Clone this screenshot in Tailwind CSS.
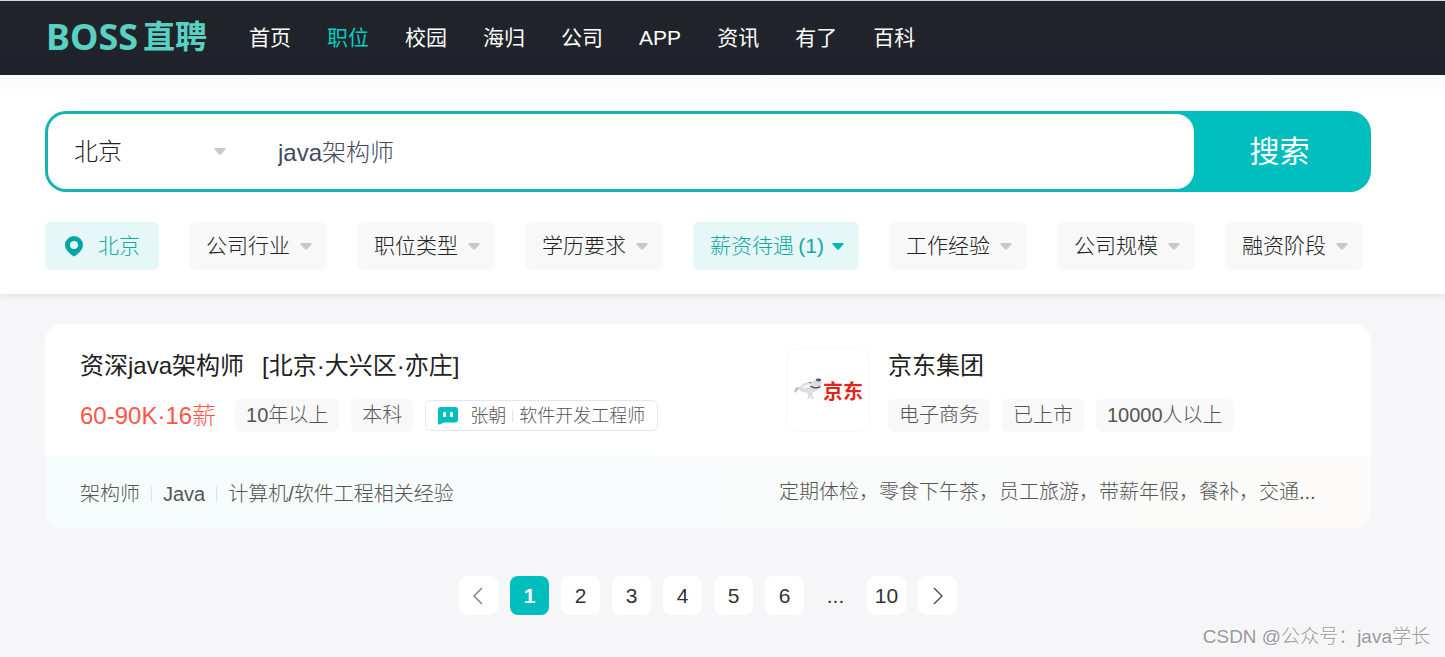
<!DOCTYPE html>
<html lang="zh-CN">
<head>
<meta charset="utf-8">
<meta name="viewport" content="width=device-width, initial-scale=1">
<title>BOSS直聘 - java架构师</title>
<script src="https://cdn.jsdelivr.net/npm/@tailwindcss/browser@4"></script>
</head>
<body class="relative flex min-h-screen flex-col bg-[#f6f6f8] font-['Liberation_Sans','Noto_Sans_CJK_SC',sans-serif] font-light text-[#222]">

<header class="flex h-[75px] items-center gap-[42px] border-t border-[#d3dcdc] bg-linear-to-b from-[#20252a] to-[#20222b] pl-[46px]">
  <a href="#" class="flex items-center gap-[5px] pb-[3px] font-bold text-[#5ad0c2]">
    <span class="font-['Noto_Sans',sans-serif] text-[36px] leading-[48px]">BOSS</span>
    <span class="text-[32px] leading-[48px]">直聘</span>
  </a>
  <nav class="flex gap-9 text-[21px] leading-8 font-normal whitespace-nowrap text-white">
    <a href="#">首页</a>
    <a href="#" class="text-[#00d0c2]">职位</a>
    <a href="#">校园</a>
    <a href="#">海归</a>
    <a href="#">公司</a>
    <a href="#">APP</a>
    <a href="#">资讯</a>
    <a href="#">有了</a>
    <a href="#">百科</a>
  </nav>
</header>

<section class="bg-linear-to-b from-[#fafafa] to-white to-10% pt-9 pr-[74px] pb-6 pl-[45px] shadow-[0_2px_6px_rgba(0,0,0,0.08)]">
  <form class="flex h-[81px] rounded-[21px] bg-[linear-gradient(to_right,#13b5b1_85%,#00bebd_85%)] p-[3px]">
    <div class="flex min-w-0 flex-1 rounded-[18px] bg-white text-2xl">
      <label class="relative flex w-[200px] items-center">
        <select aria-label="城市" class="h-full w-full appearance-none rounded-l-[18px] bg-transparent pl-[26px] outline-none"><option>北京</option></select>
        <svg class="pointer-events-none absolute right-[22px] h-[7px] w-3" viewBox="0 0 12 7" fill="#c9c9c9"><path d="M1.200 0h9.600q1.400 .3 .5 1.400L7 6.300q-1 1-2 0L.7 1.400Q-.2 .3 1.200 0z"/></svg>
      </label>
      <input type="text" aria-label="搜索职位" value="java架构师" class="min-w-0 flex-1 bg-transparent pt-0.5 pl-[30px] text-[#414a60] outline-none">
    </div>
    <button type="button" class="w-[174px] pr-[3px] text-3xl font-normal text-white">搜索</button>
  </form>

  <div class="mt-[30px] flex gap-[30px] text-[21px] whitespace-nowrap">
    <button class="flex h-12 items-center gap-[14px] rounded-md bg-[#e5f7f6] px-[19px] text-[#12a6a5]">
      <svg class="h-[22px] w-5" viewBox="0 0 20 22" fill="#00a6a7"><path fill-rule="evenodd" d="M10 1a9 9 0 0 1 9 9c0 5-5.500 9-8 11q-1 .8-2 0C6.500 19 1 15 1 10a9 9 0 0 1 9-9zm0 5a4 4 0 1 0 0 8 4 4 0 0 0 0-8z"/></svg>
      北京
    </button>
    <label class="relative flex items-center"><select aria-label="公司行业" class="h-12 w-[138px] appearance-none rounded-md bg-[#f8f8f8] pl-[17px]"><option>公司行业</option></select><svg class="pointer-events-none absolute right-[15px] h-[7px] w-3" viewBox="0 0 12 7" fill="#c9c9c9"><path d="M1.200 0h9.600q1.400 .3 .5 1.400L7 6.300q-1 1-2 0L.7 1.400Q-.2 .3 1.200 0z"/></svg></label>
    <label class="relative flex items-center"><select aria-label="职位类型" class="h-12 w-[138px] appearance-none rounded-md bg-[#f8f8f8] pl-[17px]"><option>职位类型</option></select><svg class="pointer-events-none absolute right-[15px] h-[7px] w-3" viewBox="0 0 12 7" fill="#c9c9c9"><path d="M1.200 0h9.600q1.400 .3 .5 1.400L7 6.300q-1 1-2 0L.7 1.400Q-.2 .3 1.200 0z"/></svg></label>
    <label class="relative flex items-center"><select aria-label="学历要求" class="h-12 w-[138px] appearance-none rounded-md bg-[#f8f8f8] pl-[17px]"><option>学历要求</option></select><svg class="pointer-events-none absolute right-[15px] h-[7px] w-3" viewBox="0 0 12 7" fill="#c9c9c9"><path d="M1.200 0h9.600q1.400 .3 .5 1.400L7 6.300q-1 1-2 0L.7 1.400Q-.2 .3 1.200 0z"/></svg></label>
    <label class="relative flex items-center"><select aria-label="薪资待遇" class="h-12 w-[166px] appearance-none rounded-md bg-[#e5f7f6] pl-[17px] text-[#12a6a5]"><option>薪资待遇&thinsp;(1)</option></select><svg class="pointer-events-none absolute right-[15px] h-[7px] w-3" viewBox="0 0 12 7" fill="#00b8b0"><path d="M1.200 0h9.600q1.400 .3 .5 1.400L7 6.300q-1 1-2 0L.7 1.400Q-.2 .3 1.200 0z"/></svg></label>
    <label class="relative flex items-center"><select aria-label="工作经验" class="h-12 w-[138px] appearance-none rounded-md bg-[#f8f8f8] pl-[17px]"><option>工作经验</option></select><svg class="pointer-events-none absolute right-[15px] h-[7px] w-3" viewBox="0 0 12 7" fill="#c9c9c9"><path d="M1.200 0h9.600q1.400 .3 .5 1.400L7 6.300q-1 1-2 0L.7 1.400Q-.2 .3 1.200 0z"/></svg></label>
    <label class="relative flex items-center"><select aria-label="公司规模" class="h-12 w-[138px] appearance-none rounded-md bg-[#f8f8f8] pl-[17px]"><option>公司规模</option></select><svg class="pointer-events-none absolute right-[15px] h-[7px] w-3" viewBox="0 0 12 7" fill="#c9c9c9"><path d="M1.200 0h9.600q1.400 .3 .5 1.400L7 6.300q-1 1-2 0L.7 1.400Q-.2 .3 1.200 0z"/></svg></label>
    <label class="relative flex items-center"><select aria-label="融资阶段" class="h-12 w-[138px] appearance-none rounded-md bg-[#f8f8f8] pl-[17px]"><option>融资阶段</option></select><svg class="pointer-events-none absolute right-[15px] h-[7px] w-3" viewBox="0 0 12 7" fill="#c9c9c9"><path d="M1.200 0h9.600q1.400 .3 .5 1.400L7 6.300q-1 1-2 0L.7 1.400Q-.2 .3 1.200 0z"/></svg></label>
  </div>
</section>

<main class="pt-[30px] pr-[74px] pl-[45px] whitespace-nowrap">
  <article class="overflow-hidden rounded-[18px] bg-white">
    <div class="grid grid-cols-[734fr_592fr] pt-6 pb-6">
      <div class="pl-[35px]">
        <h2 class="text-2xl leading-9 font-normal"><a href="#" class="flex gap-[18px]"><span>资深java架构师</span><span>[北京·大兴区·亦庄]</span></a></h2>
        <div class="mt-[15px] flex items-center gap-3 text-xl text-[#555]">
          <span class="mr-[7px] text-2xl leading-8 text-[#fe574a]">60-90K·16薪</span>
          <span class="rounded-md bg-[#f8f8f8] px-[11px] leading-[33px]">10年以上</span>
          <span class="rounded-md bg-[#f8f8f8] px-[11px] leading-[33px]">本科</span>
          <a href="#" class="flex h-[31px] items-center rounded-md border border-[#e3e7ed] px-3 text-lg">
            <svg class="mr-3 h-[19px] w-5" viewBox="0 0 20 19"><path fill="#00bebd" d="M3 1h14a3 3 0 0 1 3 3v9.500a3 3 0 0 1-3 3H5.500Q3.500 18 1.200 18.600Q0 18.800 0 17.500V4a3 3 0 0 1 3-3z"/><rect x="5" y="6" width="3" height="5" rx="1" fill="#fff"/><rect x="12" y="6" width="3" height="5" rx="1" fill="#fff"/></svg>
            <span>张朝</span>
            <span class="mx-[6px] h-3 w-px bg-[#e0e4ea]"></span>
            <span>软件开发工程师</span>
          </a>
        </div>
      </div>
      <div class="flex gap-[18px] pl-[7px]">
        <div class="flex size-[84px] items-center justify-center rounded-xl border border-[#f8f8f8]">
          <svg class="h-6 w-[30px]" viewBox="0 0 28 24"><path fill="#bfbfc3" d="M0 14q1-5 4-5l2 .5-.6 2Q3 11 2.500 14.500z"/><path fill="#dcdde0" d="M4 11Q9 3.500 16 4q3-.5 5.500-2.500Q25-.5 27 1.500q1.500 3-.2 6.500-2 4.500-8 6.500l-.6 2.500 1.800 4-2.300.3-1.500-3-1.200 3h-2.200l1.600-4.300-.8-2Q6.500 14.500 4 11z"/><path fill="#f3f3f5" d="M7 9.500Q12 5 19 6.500q-3 3.500-8 4z"/><ellipse cx="24.500" cy="2" rx="2.600" ry="1.400" fill="#55575c"/><path d="M16.500 8q4 3.500 10 .6" fill="none" stroke="#4b4c50" stroke-width="1.200"/><circle cx="16" cy="4.500" r=".8" fill="#555"/></svg>
          <span class="pt-1 text-xl leading-6 font-bold text-[#e1251b]">京东</span>
        </div>
        <div>
          <h3 class="text-2xl leading-9 font-normal"><a href="#">京东集团</a></h3>
          <div class="mt-[15px] flex gap-3 text-xl text-[#555]">
            <span class="rounded-md bg-[#f8f8f8] px-[11px] leading-[33px]">电子商务</span>
            <span class="rounded-md bg-[#f8f8f8] px-[11px] leading-[33px]">已上市</span>
            <span class="rounded-md bg-[#f8f8f8] px-[11px] leading-[33px]">10000人以上</span>
          </div>
        </div>
      </div>
    </div>
    <div class="grid h-[72px] grid-cols-[734fr_592fr] items-center bg-linear-to-r from-[#f5fcfc] to-[#fcfbfa] text-xl text-[#555]">
      <div class="flex items-center pt-1 pl-[35px]">
        <span>架构师</span>
        <span class="mx-[11px] h-4 w-px bg-[#dfe2e5]"></span>
        <span>Java</span>
        <span class="mx-[11px] h-4 w-px bg-[#dfe2e5]"></span>
        <span>计算机/软件工程相关经验</span>
      </div>
      <p class="truncate">定期体检，零食下午茶，员工旅游，带薪年假，餐补，交通...</p>
    </div>
  </article>

  <nav aria-label="分页" class="mt-12 flex justify-center gap-3 text-[21px] leading-[39px] text-[#333]">
    <a href="#" aria-label="上一页" class="flex size-[39px] items-center justify-center rounded-lg bg-white"><svg class="size-[18px]" viewBox="0 0 18 18" fill="none" stroke="#777" stroke-width="1.300"><path d="M12 1L4 9l8 8"/></svg></a>
    <a href="#" class="size-[39px] rounded-lg bg-[#00bebd] text-center font-bold text-white" aria-current="page">1</a>
    <a href="#" class="size-[39px] rounded-lg bg-white text-center">2</a>
    <a href="#" class="size-[39px] rounded-lg bg-white text-center">3</a>
    <a href="#" class="size-[39px] rounded-lg bg-white text-center">4</a>
    <a href="#" class="size-[39px] rounded-lg bg-white text-center">5</a>
    <a href="#" class="size-[39px] rounded-lg bg-white text-center">6</a>
    <span class="size-[39px] text-center">...</span>
    <a href="#" class="size-[39px] rounded-lg bg-white text-center">10</a>
    <a href="#" aria-label="下一页" class="flex size-[39px] items-center justify-center rounded-lg bg-white"><svg class="size-[18px]" viewBox="0 0 18 18" fill="none" stroke="#444" stroke-width="1.300"><path d="M5 1l8 8-8 8"/></svg></a>
  </nav>
</main>

<p class="absolute right-[15px] bottom-[6px] text-[19px] leading-7 text-[#999] [text-shadow:1px_1px_0_#fff]">CSDN @公众号：java学长</p>
</body>
</html>
